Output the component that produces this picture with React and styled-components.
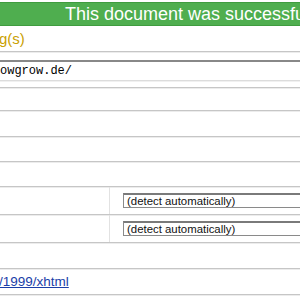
import React from "react";
import styled, { createGlobalStyle } from "styled-components";

const Global = createGlobalStyle`
  html, body { margin: 0; padding: 0; background: #fff; }
  body {
    width: 300px;
    height: 300px;
    overflow: hidden;
    font-family: "Liberation Sans", Arial, sans-serif;
  }
`;

const Page = styled.div`
  padding-top: 2px;
  width: 300px;
`;

const Banner = styled.h2`
  margin: 0;
  height: 22px;
  line-height: 22px;
  background: #4fae4f;
  border-top: 1px solid #3f9c3f;
  border-bottom: 1px solid #3f9c3f;
  color: #fff;
  font-size: 18px;
  font-weight: normal;
  padding-left: 65px;
  white-space: nowrap;
  overflow: hidden;
`;

const Row = styled.div`
  height: ${(p) => p.$h}px;
  border-bottom: 1px solid #c6c6c6;
  box-shadow: 0 1px 0 #ececec;
  display: ${(p) => (p.$split ? "grid" : "flex")};
  grid-template-columns: 110px 1fr;
  align-items: center;
  overflow: hidden;
  box-sizing: content-box;
`;

const Result = styled.span`
  color: #c9a000;
  font-size: 15px;
  margin-left: -1px;
`;

const UriField = styled.div`
  width: 320px;
  height: 18px;
  margin-top: 2px;
  border-top: 2px solid #888;
  border-bottom: 1px solid #dcdcdc;
  background: #fff;
  font-family: "Liberation Mono", "Courier New", monospace;
  font-size: 12px;
  line-height: 18px;
  white-space: nowrap;
  box-shadow: 0 1px 0 #f0f0f0;
`;

const LabelCell = styled.div`
  height: 100%;
  border-right: 1px solid #e2e2e2;
`;

const SelectCell = styled.div`
  display: flex;
  align-items: center;
  padding-left: 13px;
  height: 100%;
`;

const Select = styled.div`
  width: 220px;
  height: 12px;
  border: 1px solid #8a8a8a;
  border-top: 2px solid #7a7a7a;
  background: #fff;
  font-size: 11.4px;
  line-height: 12px;
  padding-left: 3px;
  white-space: nowrap;
  color: #111;
`;

const NsLink = styled.a`
  color: #1a3ea8;
  text-decoration: underline;
  font-size: 13.5px;
  margin-left: -1px;
`;

export default function App() {
  return (
    <>
      <Global />
      <Page>
        <Banner>This document was successfully checked as XHTML 1.0 Transitional!</Banner>
        <Row $h={25}>
          <Result>g(s)</Result>
        </Row>
        <Row $h={35}>
          <UriField>owgrow.de/</UriField>
        </Row>
        <Row $h={22} />
        <Row $h={25} />
        <Row $h={24} />
        <Row $h={24} />
        <Row $h={27} $split>
          <LabelCell />
          <SelectCell>
            <Select>(detect automatically)</Select>
          </SelectCell>
        </Row>
        <Row $h={27} $split>
          <LabelCell />
          <SelectCell>
            <Select>(detect automatically)</Select>
          </SelectCell>
        </Row>
        <Row $h={25} />
        <Row $h={25}>
          <NsLink href="#">/1999/xhtml</NsLink>
        </Row>
      </Page>
    </>
  );
}
